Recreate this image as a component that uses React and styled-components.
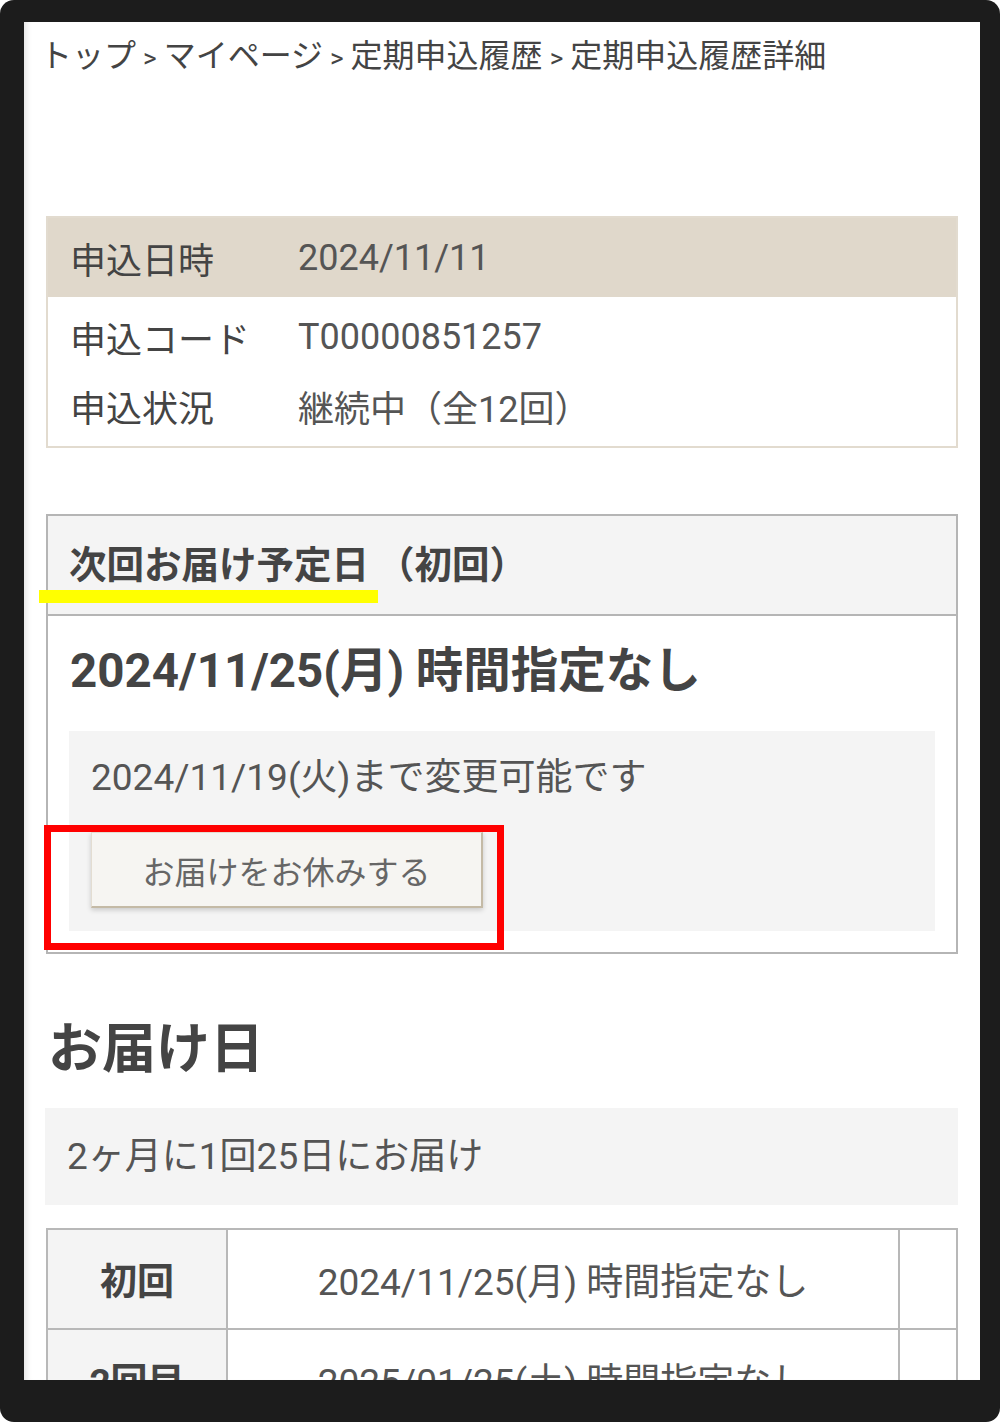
import React from 'react'
import styled, { createGlobalStyle } from 'styled-components'

const GlobalStyle = createGlobalStyle`
  html, body {
    margin: 0;
    padding: 0;
    background: #ffffff;
  }
  body {
    font-family: Roboto, 'Noto Sans CJK JP', sans-serif;
    color: #444;
  }
  * {
    box-sizing: border-box;
  }
`

const Frame = styled.div`
  width: 1000px;
  height: 1422px;
  padding: 22px 20px 42px 24px;
  background: #1c1c1c;
  border-radius: 14px;
`

const Screen = styled.div`
  height: 100%;
  overflow: hidden;
  background: #ffffff;
  padding: 14px 22px 0 22px;
  box-shadow: inset 7px 0 6px -5px rgba(0, 0, 0, 0.12);
`

const Breadcrumb = styled.nav`
  margin: 0 -6px;
  height: 40px;
  font-size: 32px;
  line-height: 40px;
  color: #444;
  white-space: nowrap;
  .sep {
    font-size: 26px;
    margin: 0 7px;
  }
`

const InfoBox = styled.div`
  margin-top: 140px;
  border: 2px solid #e2dbcf;
`

const InfoBody = styled.div`
  padding: 5px 0 6px 0;
`

const InfoRow = styled.div`
  display: grid;
  grid-template-columns: 228px 1fr;
  align-items: center;
  padding-left: 22px;
  font-size: 36px;
  height: ${p => (p.$head ? '79px' : '69px')};
  background: ${p => (p.$head ? '#e0d8cb' : 'transparent')};
`

const Label = styled.span`
  color: #444;
`

const Value = styled.span`
  color: #555;
`

const NextBox = styled.section`
  margin-top: 66px;
  border: 2px solid #b5b5b5;
`

const NextHead = styled.h2`
  position: relative;
  margin: 0;
  height: 100px;
  display: flex;
  align-items: center;
  padding: 0 0 8px 21px;
  background: #f4f4f4;
  border-bottom: 2px solid #b5b5b5;
  font-size: 37.5px;
  font-weight: 700;
  color: #444;
  .sub {
    margin-left: 8px;
  }
`

const Marker = styled.span`
  position: absolute;
  left: -9px;
  top: 74px;
  width: 339px;
  height: 13px;
  background: #ffff00;
`

const NextBody = styled.div`
  padding: 0 21px 21px 21px;
`

const BigDate = styled.div`
  padding: 25px 0 0 1px;
  margin-bottom: 30px;
  font-size: 47.5px;
  line-height: 60px;
  height: 85px;
  font-weight: 700;
  color: #444;
`

const Panel = styled.div`
  background: #f4f4f4;
  padding: 24px 22px 23px 22px;
`

const Notice = styled.p`
  margin: 0;
  height: 46px;
  font-size: 37px;
  line-height: 46px;
  color: #555;
`

const ButtonWrap = styled.div`
  position: relative;
  margin-top: 31px;
  width: 392px;
`

const PauseButton = styled.button`
  display: block;
  width: 392px;
  height: 76px;
  background: #f6f5f2;
  border: 1px solid #e3ddd2;
  border-right: 2px solid #c4baa6;
  border-bottom: 2px solid #c4baa6;
  box-shadow: 0 2px 5px rgba(0, 0, 0, 0.18);
  font-family: Roboto, 'Noto Sans CJK JP', sans-serif;
  font-size: 32px;
  color: #666;
  padding: 0;
  cursor: pointer;
`

const Highlight = styled.span`
  position: absolute;
  left: -47px;
  top: -7px;
  width: 460px;
  height: 125px;
  border: 7px solid #ff0000;
  pointer-events: none;
`

const SectionTitle = styled.h2`
  margin: 60px 0 0 2px;
  height: 72px;
  font-size: 54px;
  line-height: 72px;
  font-weight: 700;
  color: #444;
`

const Cycle = styled.div`
  margin-top: 22px;
  margin-left: -1px;
  height: 97px;
  line-height: 97px;
  padding: 0 22px;
  background: #f4f4f4;
  font-size: 37px;
  color: #555;
`

const ScheduleTable = styled.table`
  margin-top: 23px;
  width: 100%;
  border-collapse: collapse;
  border: 2px solid #b8b8b8;
`

const Th = styled.th`
  width: 180px;
  height: 100px;
  background: #f4f4f4;
  border: 2px solid #b8b8b8;
  font-size: 37px;
  font-weight: 700;
  color: #444;
  text-align: center;
`

const Td = styled.td`
  height: 100px;
  border: 2px solid #b8b8b8;
  font-size: 37px;
  color: #555;
  text-align: center;
  width: ${p => (p.$blank ? '58px' : 'auto')};
`

const schedule = [
  { no: '初回', date: '2024/11/25(月) 時間指定なし' },
  { no: '2回目', date: '2025/01/25(土) 時間指定なし' },
  { no: '3回目', date: '2025/03/25(火) 時間指定なし' },
  { no: '4回目', date: '2025/05/25(日) 時間指定なし' },
]

function App() {
  return (
    <>
      <GlobalStyle />
      <Frame>
        <Screen>
          <Breadcrumb>
            トップ<span className="sep">&gt;</span>マイページ<span className="sep">&gt;</span>定期申込履歴<span className="sep">&gt;</span>定期申込履歴詳細
          </Breadcrumb>

          <InfoBox>
            <InfoRow $head>
              <Label>申込日時</Label>
              <Value>2024/11/11</Value>
            </InfoRow>
            <InfoBody>
              <InfoRow>
                <Label>申込コード</Label>
                <Value>T00000851257</Value>
              </InfoRow>
              <InfoRow>
                <Label>申込状況</Label>
                <Value>継続中（全12回）</Value>
              </InfoRow>
            </InfoBody>
          </InfoBox>

          <NextBox>
            <NextHead>
              次回お届け予定日<span className="sub">（初回）</span>
              <Marker />
            </NextHead>
            <NextBody>
              <BigDate>2024/11/25(月) 時間指定なし</BigDate>
              <Panel>
                <Notice>2024/11/19(火)まで変更可能です</Notice>
                <ButtonWrap>
                  <PauseButton type="button">お届けをお休みする</PauseButton>
                  <Highlight />
                </ButtonWrap>
              </Panel>
            </NextBody>
          </NextBox>

          <SectionTitle>お届け日</SectionTitle>
          <Cycle>2ヶ月に1回25日にお届け</Cycle>

          <ScheduleTable>
            <tbody>
              {schedule.map(row => (
                <tr key={row.no}>
                  <Th>{row.no}</Th>
                  <Td>{row.date}</Td>
                  <Td $blank />
                </tr>
              ))}
            </tbody>
          </ScheduleTable>
        </Screen>
      </Frame>
    </>
  )
}

export default App
